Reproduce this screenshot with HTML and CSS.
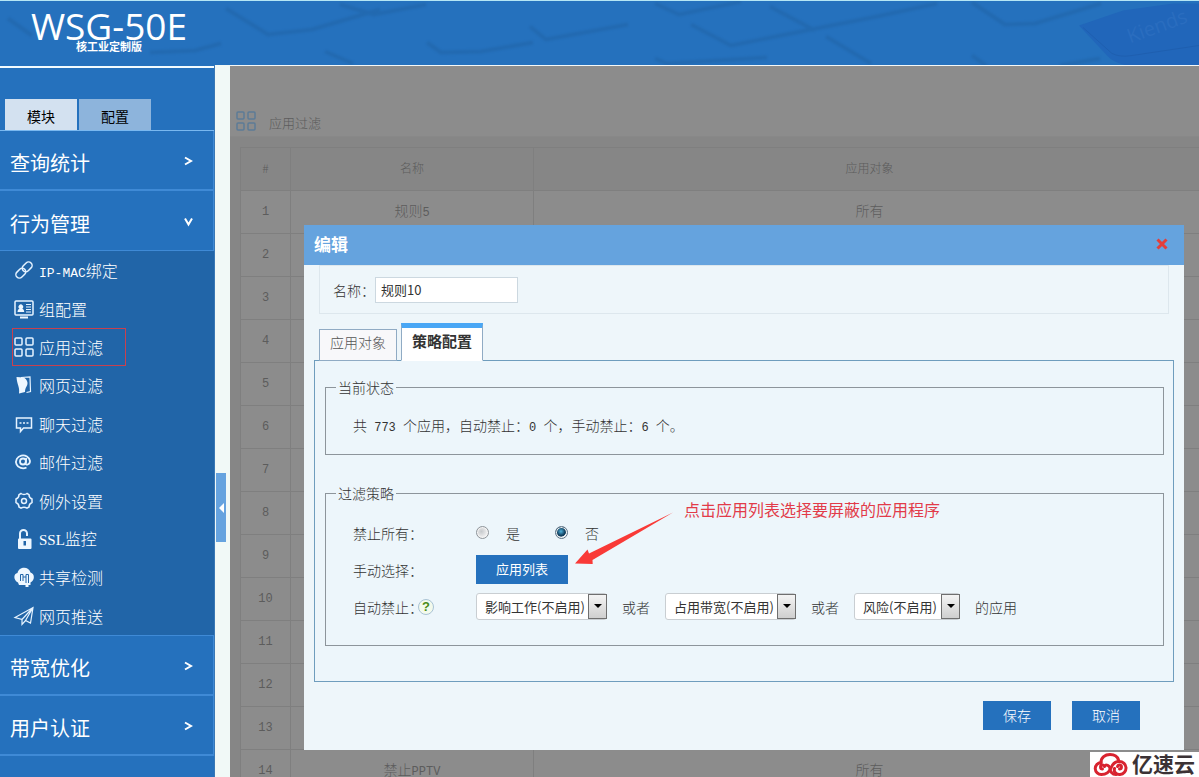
FILE: index.html
```html
<!DOCTYPE html>
<html lang="zh-CN">
<head>
<meta charset="utf-8">
<title>WSG-50E</title>
<link rel="stylesheet" href="styles.css">
</head>
<body>
<header class="top">
  <svg class="top-art" viewBox="0 0 1199 65" preserveAspectRatio="xMaxYMid slice" aria-hidden="true">
    <g class="keys">
      <path d="M226 8l42 26 44-5 68-20"/>
      <path d="M8 18l24 17M150 52l45-2 26-7"/>
      <path d="M427 42l14 10 40-1 52-9M530 26l16 13 82-15"/>
      <path d="M655 3l24 11 62-13M691 24l40 21 70-14 76-15 60-13M770 6l45 24M826 36l45 27"/>
      <path d="M972 2l33 22 30-1 66-20M972 55l14 10M1100 58l-40 7M655 58l12 5 100-6"/>
      <path d="M340 4l34 10 52-10M325 51l28 12"/>
    </g>
    <path d="M1079 25l44-15 50-7h26v62h-72q-14-3-20-10z" fill="#2166ba"/>
    <path d="M1083 27l29 26q8 4 20 2l67-10" fill="none" stroke="#1c58a6" stroke-width="1" opacity=".5"/>
    <text class="art-text" x="1130" y="43" transform="rotate(-20 1130 43)">Kiends</text>
  </svg>
  <div class="brand">
    <div class="brand-name">WSG-50E</div>
    <div class="brand-sub">核工业定制版</div>
  </div>
</header>
<div class="page">
  <nav class="side">
    <div class="side-line"></div>
    <div class="side-tabs">
      <button class="side-tab side-tab-on" type="button">模块</button>
      <button class="side-tab" type="button">配置</button>
    </div>
    <a class="cat" href="#"><span>查询统计</span><svg width="10" height="10" viewBox="0 0 10 10"><path d="M2 1.500l6 3.500-6 3.500"/></svg></a>
    <a class="cat cat-open" href="#"><span>行为管理</span><svg width="10" height="10" viewBox="0 0 10 10"><path d="M2 1.500l3.500 6L9 1.500"/></svg></a>
    <div class="sub">
      <a href="#"><svg width="20" height="20" viewBox="0 0 20 20"><g transform="rotate(-45 10 10)"><rect x="0" y="6.500" width="11" height="7" rx="3.500"/><rect x="9" y="6.500" width="11" height="7" rx="3.500"/></g></svg><span><span class="latin">IP-MAC</span>绑定</span></a>
      <a href="#"><svg width="20" height="20" viewBox="0 0 20 20"><rect x="1" y="2" width="18" height="14" rx="1"/><path class="f" d="M3.500 13c0-2 1-3 2-3.300a2.300 2.300 0 1 1 2.700 0c1 .3 2 1.300 2 3.300zM6 17.500h8v2H6z"/><path d="M12 5.500h5M12 8h5M12 10.500h5M12 13h5" stroke-width="1"/></svg><span>组配置</span></a>
      <a class="picked" href="#"><svg width="20" height="20" viewBox="0 0 20 20"><rect x="1" y="1" width="7" height="7" rx="1"/><rect x="12" y="1" width="7" height="7" rx="1"/><rect x="1" y="12" width="7" height="7" rx="1"/><rect x="12" y="12" width="7" height="7" rx="1"/></svg><span>应用过滤</span></a>
      <a href="#"><svg width="20" height="20" viewBox="0 0 20 20"><path d="M7 2.500l9-.5.500 14.500-4 1" stroke-width="1.200"/><path class="f" d="M2.500 2l7 .5c4 2 5 6 3 9-1 1.500-1.500 3-1.500 5.500l-6 1.500C6 12 3 10 2.500 2z"/></svg><span>网页过滤</span></a>
      <a href="#"><svg width="20" height="20" viewBox="0 0 20 20"><path d="M2.500 4h15v10H9.500L6.500 17.500V14h-4z"/><path d="M5.500 9h2M9 9h2M12.500 9h2"/></svg><span>聊天过滤</span></a>
      <a href="#"><svg width="20" height="20" viewBox="0 0 20 20"><g stroke-width="1.800"><circle cx="9" cy="9.500" r="3"/><path d="M12.300 6l-.8 5.500c0 2 4.500 1.500 4.500-2.500a7 6.500 0 1 0-3.500 6.500"/></g></svg><span>邮件过滤</span></a>
      <a href="#"><svg width="20" height="20" viewBox="0 0 20 20"><path d="M7 2.500q3 2 6 0l2 1.200q0 3.200 3 4.300v3.500q-3 1.300-3 4.500l-2 1.200q-3-2-6 0L5 16q0-3.200-3-4.500V8q3-1.100 3-4.300z"/><circle cx="10" cy="10" r="2.500"/></svg><span>例外设置</span></a>
      <a href="#"><svg width="20" height="20" viewBox="0 0 20 20"><path d="M6 10V4.500a3.500 3.500 0 0 1 7 0V7" stroke-width="2"/><path class="f" fill-rule="evenodd" d="M4.500 9.500h12a1 1 0 0 1 1 1V19q0 1-1 1H5q-1 0-1-1v-8.500zM9.500 12v4.500h2.500V12z"/></svg><span><span class="latin serif">SSL</span>监控</span></a>
      <a href="#"><svg width="20" height="20" viewBox="0 0 20 20"><path class="f" d="M4 15.500C-1 13-.5 6.500 3.500 6 5-1 15-1 16.500 5.500c4.500 1 4.500 8 0 10V18h-2v2h-3v-2H5z"/><path class="cut" d="M6.500 14V7.500H9V14M12 16V7.500h2.500V16M9 10h3"/></svg><span>共享检测</span></a>
      <a href="#"><svg width="20" height="20" viewBox="0 0 20 20"><path d="M1 11.500L19 1.500l-2.500 15.500-5-2.500L8 18.500v-5zM8 13.500L19 1.500M11.500 14.500L19 1.500" stroke-width="1.200"/></svg><span>网页推送</span></a>
    </div>
    <a class="cat" href="#"><span>带宽优化</span><svg width="10" height="10" viewBox="0 0 10 10"><path d="M2 1.500l6 3.500-6 3.500"/></svg></a>
    <a class="cat" href="#"><span>用户认证</span><svg width="10" height="10" viewBox="0 0 10 10"><path d="M2 1.500l6 3.500-6 3.500"/></svg></a>
  </nav>
  <div class="gutter"><button class="fold" type="button" aria-label="收起"></button></div>
  <main class="main">
    <div class="title">
      <svg width="20" height="20" viewBox="0 0 20 20"><rect x="1" y="1" width="7" height="7" rx="1"/><rect x="12" y="1" width="7" height="7" rx="1"/><rect x="1" y="12" width="7" height="7" rx="1"/><rect x="12" y="12" width="7" height="7" rx="1"/></svg>
      <span>应用过滤</span>
    </div>
    <div class="list">
      <table>
        <thead><tr><th class="c-num">#</th><th class="c-name">名称</th><th>应用对象</th></tr></thead>
        <tbody>
          <tr><td>1</td><td>规则<span class="num">5</span></td><td>所有</td></tr>
          <tr><td>2</td><td></td><td></td></tr>
          <tr><td>3</td><td></td><td></td></tr>
          <tr><td>4</td><td></td><td></td></tr>
          <tr><td>5</td><td></td><td></td></tr>
          <tr><td>6</td><td></td><td></td></tr>
          <tr><td>7</td><td></td><td></td></tr>
          <tr><td>8</td><td></td><td></td></tr>
          <tr><td>9</td><td></td><td></td></tr>
          <tr><td>10</td><td></td><td></td></tr>
          <tr><td>11</td><td></td><td></td></tr>
          <tr><td>12</td><td></td><td></td></tr>
          <tr><td>13</td><td></td><td></td></tr>
          <tr><td>14</td><td>禁止<span class="num">PPTV</span></td><td>所有</td></tr>
        </tbody>
      </table>
    </div>
  </main>
</div>

<div class="overlay">
  <section class="dialog" role="dialog" aria-labelledby="dlg-title">
    <div class="dlg-head">
      <h2 id="dlg-title">编辑</h2>
      <button class="close" type="button" aria-label="关闭"><svg width="12" height="12" viewBox="0 0 12 12"><path d="M1.500 1.500l9 9M10.500 1.500l-9 9"/></svg></button>
    </div>
    <div class="name-box">
      <label for="rule">名称：</label><input id="rule" type="text" value="规则10">
    </div>
    <div class="tabs">
      <button class="tab" type="button">应用对象</button>
      <button class="tab tab-on" type="button">策略配置</button>
    </div>
    <div class="panel">
      <fieldset class="status">
        <legend>当前状态</legend>
        <p>共<span class="num"> 773 </span>个应用，自动禁止：<span class="num">0 </span>个，手动禁止：<span class="num">6 </span>个。</p>
      </fieldset>
      <fieldset class="policy">
        <legend>过滤策略</legend>
        <div class="row">
          <span class="row-label">禁止所有：</span>
          <label class="opt"><input type="radio" name="all">是</label>
          <label class="opt"><input type="radio" name="all" checked>否</label>
        </div>
        <div class="row">
          <span class="row-label">手动选择：</span>
          <button class="btn btn-wide" type="button">应用列表</button>
        </div>
        <div class="row">
          <span class="row-label">自动禁止：<button class="help" type="button">?</button></span>
          <span class="auto">
            <span class="pick pick-l"><select aria-label="影响工作"><option>影响工作(不启用)</option></select></span>
            <span>或者</span>
            <span class="pick pick-l"><select aria-label="占用带宽"><option>占用带宽(不启用)</option></select></span>
            <span>或者</span>
            <span class="pick pick-s"><select aria-label="风险"><option>风险(不启用)</option></select></span>
            <span>的应用</span>
          </span>
        </div>
        <div class="note">
          <svg width="110" height="65" viewBox="570 505 110 65" aria-hidden="true"><path d="M575 563.500L587.500 549.500L589 553.500L673 512.500L592.500 560L592.700 564z"/></svg>
          <span>点击应用列表选择要屏蔽的应用程序</span>
        </div>
      </fieldset>
    </div>
    <div class="actions">
      <button class="btn" type="button">保存</button>
      <button class="btn" type="button">取消</button>
    </div>
  </section>
</div>

<div class="mark">
  <svg width="36" height="24" viewBox="0 0 36 24"><g fill="none" stroke="#d8232f" stroke-width="3" stroke-linecap="round"><path d="M8 9.500C8 4.500 12 1.500 17 1.500c4.500 0 7.500 2 8.500 5.500"/><path d="M9.500 16a2 2 0 1 1 2-2.500M8 9.500A6 6 0 0 0 8.500 21.500c6 0 8-3 9.500-6.500 1.500-4 4-6.500 8-6.500a6.300 6.300 0 0 1 1 13c-4 .3-6.500-3-5.500-6"/><path d="M13 12c2.500 0 4 2 4 4s2 5.500 6 5.500M26.500 16a2 2 0 1 0-2-2.500"/></g></svg>
  <span>亿速云</span>
</div>
</body>
</html>
```
FILE: styles.css
```css
* { box-sizing: border-box; }
body {
  margin: 0;
  height: 100vh;
  overflow: hidden;
  display: flex;
  flex-direction: column;
  position: relative;
  background: #8c8c8c;
  color: #333;
  font-family: "Noto Sans CJK SC", sans-serif;
  font-weight: 300;
  font-size: 14px;
  line-height: 20px;
}
button, input, select { font: inherit; color: inherit; margin: 0; }
button { padding: 0; border: 0; cursor: pointer; }
a { color: inherit; text-decoration: none; }

.top {
  position: relative;
  flex: none;
  height: 65px;
  border-top: 1px solid #b5e6f5;
  background: #2571bd;
  overflow: hidden;
}
.top-art { position: absolute; inset: 0; width: 100%; height: 100%; }
.keys { fill: none; stroke: #1f5f9f; stroke-width: 4; stroke-linejoin: round; opacity: .4; filter: blur(1px); }
.art-text { fill: #2a6dbf; font: 20px "Open Sans", sans-serif; }
.brand { position: relative; width: 218px; padding-top: 5px; color: #fff; text-align: center; }
.brand-name { font: 37px/40px "Open Sans", sans-serif; }
.brand-sub { font-size: 11px; line-height: 12px; font-weight: 700; margin-top: -6px; }

.page { flex: 1; display: flex; min-height: 0; }
.side { flex: none; width: 214px; padding-top: 1px; background: #2571bd; color: #fff; overflow: hidden; }
.side-line { height: 2px; background: #f2fbff; }
.side-tabs { display: flex; gap: 2px; padding: 31px 5px 0; border-bottom: 1px solid #79b8f0; }
.side-tab { width: 72px; height: 31px; padding-top: 2px; background: #8db4dc; color: #000; font-weight: 400; }
.side-tab-on { background: #d3e1f0; }
.cat {
  display: flex;
  align-items: center;
  justify-content: space-between;
  height: 60px;
  padding: 6px 20px 0 10px;
  border-bottom: 2px solid #3f8ad6;
  border-right: 1px solid #3f8ad6;
  font-size: 20px;
  line-height: 30px;
  font-weight: 400;
}
.cat-open { border-bottom-width: 1px; }
.cat svg { fill: none; stroke: #fff; stroke-width: 2; margin-bottom: 4px; }
.sub { display: grid; grid-auto-rows: 1fr; min-height: 385px; background: #2165a8; border-bottom: 1px solid #3f8ad6; font-size: 16px; }
.sub a { display: flex; align-items: center; gap: 5px; width: 114px; margin-left: 12px; padding-left: 1px; white-space: nowrap; border: 1px solid transparent; }
.sub .picked { border-color: #c9404e; }
.sub svg { flex: none; fill: none; stroke: #e6f3ff; stroke-width: 1.5; overflow: visible; }
.sub svg .f { fill: #eef7ff; stroke: none; }
.sub svg .cut { stroke: #2165a8; stroke-width: 1; }
.latin { font: 13px "Liberation Mono", monospace; }
.serif { font: 15px "Liberation Serif", serif; }

.gutter { flex: none; width: 16px; display: flex; align-items: center; background: #f1f9f7; border-left: 1px solid #3a78b5; padding-top: 173px; padding-left: 1px; }
.fold { display: grid; place-items: center end; width: 10px; height: 69px; background: #66a3df; }
.fold::before { content: ""; border: 5px solid transparent; border-left: 0; border-right-color: #fff; margin-right: 2px; }

.main { flex: 1; min-width: 0; overflow: hidden; background: #8c8c8c; border-top: 1px solid #f4f8f8; color: #5c5c5c; }
.title { display: flex; align-items: center; gap: 13px; height: 71px; padding: 39px 0 0 6px; font-size: 13px; border-bottom: 1px solid #888; }
.title span { padding-top: 5px; }
.title svg { fill: none; stroke: #5c7b96; stroke-width: 1.5; }
.list { padding: 10px 0 0 10px; margin-right: -7px; background: #868686; }
table { width: 100%; border-collapse: collapse; table-layout: fixed; text-align: center; background: #8c8c8c; }
th, td { height: 43px; padding: 0; border: 1px solid #7f7f7f; }
td { padding-bottom: 4px; }
th { font-weight: 300; font-size: 12px; padding-bottom: 2px; background: #868686; }
td:first-child { padding-bottom: 1px; line-height: 14px; font-family: "Liberation Mono", monospace; font-size: 12px; }
.c-num { width: 50px; }
.c-name { width: 243px; }

.overlay { position: absolute; inset: 0; padding: 225px 15px 0 304px; }
.dialog { background: #eef6fa; }
.dlg-head { display: flex; align-items: center; justify-content: space-between; height: 40px; padding: 0 16px 2px 10px; background: #65a3de; }
.dlg-head h2 { margin: 0; font-size: 17px; font-weight: 700; color: #fff; }
.close { display: flex; background: none; }
.close svg { stroke: #e33e3a; stroke-width: 3; }
.name-box { display: flex; align-items: center; margin: 0 15px; height: 49px; padding-left: 13px; border: 1px solid #dde7ed; }
.name-box input { width: 143px; height: 26px; padding: 0 5px; border: 1px solid #ccd8e0; background: #fff; font-size: 13px; font-weight: 400; }
.name-box label { width: 42px; white-space: nowrap; }
.tabs { display: flex; align-items: flex-end; gap: 4px; margin: 9px 15px -1px; }
.tab { width: 78px; height: 32px; background: #f8f8fa; border: 1px solid #90abc4; color: #555; padding-bottom: 6px; }
.tab-on { width: 82px; height: 38px; background: #fff; border-top: 5px solid #49a7f5; border-bottom-color: #fff; font-size: 15px; font-weight: 700; color: #333; z-index: 1; }
.panel { margin: 0 10px; padding: 16px 9px 35px 10px; border: 1px solid #6f9dbd; background: #edf6fb; }
fieldset { margin: 0; min-width: 0; border: 1px solid #8d959b; padding: 0 27px; }
legend { padding: 0 2px; margin-left: -17px; line-height: 20px; }
.status p { margin: 0; padding: 18px 0 19px; white-space: nowrap; }
.num { font: 12px "Liberation Mono", monospace; white-space: pre; }
.policy { position: relative; margin-top: 28px; padding-top: 11px; padding-bottom: 20px; }
.row { display: flex; align-items: center; height: 37px; white-space: nowrap; }
.row-label { display: flex; align-items: center; width: 123px; flex: none; }
.help { width: 16px; height: 16px; margin-left: -5px; border: 1px solid #a9c3d5; border-radius: 50%; background: #f3faec; color: #4a8b16; font: bold 13px/13px "Liberation Sans", sans-serif; }
.opt { display: flex; align-items: center; gap: 17px; margin-right: 35px; }
.opt input { appearance: none; width: 13px; height: 13px; border: 1px solid #8e9499; border-radius: 50%; background: radial-gradient(circle at 40% 40%, #c6c9cc, #f6f6f6 75%); box-shadow: inset 0 0 0 1px #f4f4f4; }
.opt input:checked { border-color: #5a7184; background: radial-gradient(circle at 45% 40%, #4fb4de 0, #12405f 45%, #12405f 55%, #f4f8fa 62%); }
.btn { width: 68px; height: 29px; padding-bottom: 2px; background: #2571bd; color: #fff; }
.btn-wide { width: 92px; font-size: 13px; font-weight: 400; }
.auto { display: flex; align-items: center; gap: 15px; }
.pick { position: relative; height: 27px; }
.pick-l { width: 131px; }
.pick-s { width: 106px; }
.pick select { appearance: none; display: block; width: 100%; height: 100%; padding: 0 17px 0 8px; border: 1px solid #c9ced2; border-radius: 3px; background: #fff; font-size: 13px; font-weight: 400; }
.pick::before { content: ""; position: absolute; right: 0; top: 1px; bottom: 1px; width: 17px; border: 1px solid #6f6f6f; background: linear-gradient(#f4f4f4, #cfcfcf); pointer-events: none; }
.pick::after { content: ""; position: absolute; right: 5px; top: 11px; border: 4px solid transparent; border-top-color: #000; border-bottom: 0; pointer-events: none; }
.note { position: absolute; left: 244px; top: 2px; display: flex; gap: 4px; color: #e23b49; font-size: 16px; font-weight: 400; white-space: nowrap; pointer-events: none; }
.note svg { fill: #f93a37; }
.note span { margin-top: -6px; }
.actions { display: flex; justify-content: flex-end; gap: 21px; padding: 19px 44px 20px; }

.mark { position: absolute; right: 0; bottom: 0; display: flex; align-items: center; gap: 3px; height: 25px; padding: 0 4px 0 3px; background: #fff; color: #3b3235; font-size: 21px; font-weight: 700; }
.mark span { padding-bottom: 3px; }
```
